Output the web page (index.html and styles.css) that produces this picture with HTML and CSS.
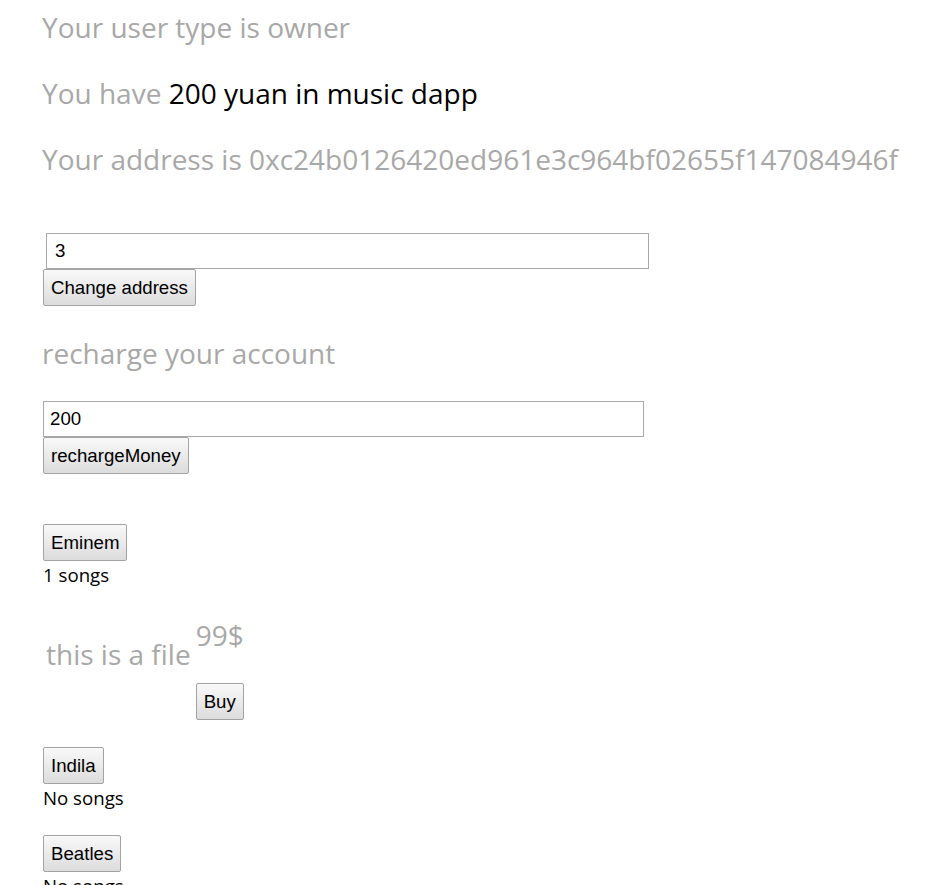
FILE: index.html
```html
<!DOCTYPE html>
<html>
<head>
<meta charset="utf-8">
<link rel="stylesheet" href="styles.css">
</head>
<body>
<div class="page">
  <p class="info">Your user type is owner</p>
  <p class="info">You have <span class="amount">200 yuan in music dapp</span></p>
  <p class="info info-last">Your address is 0xc24b0126420ed961e3c964bf02655f147084946f</p>

  <section class="form form-address">
    <input class="field field-address" type="text" value="3">
    <button class="btn">Change address</button>
  </section>

  <p class="info recharge-title">recharge your account</p>

  <section class="form form-recharge">
    <input class="field field-recharge" type="text" value="200">
    <button class="btn">rechargeMoney</button>
  </section>

  <section class="artist artist-first">
    <button class="btn">Eminem</button>
    <div class="count">1 songs</div>
    <div class="song">
      <p class="song-name">this is a file</p>
      <div class="song-buy">
        <p class="song-price">99$</p>
        <button class="btn">Buy</button>
      </div>
    </div>
  </section>

  <section class="artist">
    <button class="btn">Indila</button>
    <div class="count">No songs</div>
  </section>

  <section class="artist artist-tight">
    <button class="btn">Beatles</button>
    <div class="count">No songs</div>
  </section>
</div>
</body>
</html>
```

FILE: styles.css
```css
html, body {
  margin: 0;
  padding: 0;
  background: #ffffff;
}

.page {
  padding: 8px 0 0 43px;
  font-family: "Open Sans", sans-serif;
}

.info {
  margin: 0 0 28px 0;
  font-family: "Open Sans", sans-serif;
  font-size: 28px;
  line-height: 38px;
  color: #a8a8a8;
  white-space: nowrap;
  margin-left: -1px;
}

.amount {
  color: #000000;
}

.info-last {
  margin-bottom: 0;
}

.form {
  display: flex;
  flex-direction: column;
  align-items: flex-start;
}

.form-address {
  margin-top: 55px;
}

.field {
  box-sizing: border-box;
  height: 36px;
  border: 1px solid #a9a9a9;
  border-radius: 0;
  background: #fff;
  font-family: "Liberation Sans", Arial, sans-serif;
  font-size: 18.67px;
  color: #000;
  outline: none;
  margin: 0;
}

.field-address {
  margin-left: 3px;
  width: 603px;
  padding: 0 8px;
}

.field-recharge {
  width: 601px;
  padding: 0 6px;
}

.btn {
  box-sizing: border-box;
  height: 37px;
  margin: 0;
  padding: 0 7px;
  border: 1px solid #a3a3a3;
  border-radius: 2px;
  background: linear-gradient(#f9f9f9, #dcdcdc);
  font-family: "Liberation Sans", Arial, sans-serif;
  font-size: 18.67px;
  color: #000;
}

.recharge-title {
  margin: 28px 0 29px -1px;
}

.artist {
  margin-top: 27px;
}

.artist-first {
  margin-top: 50px;
}

.artist-tight {
  margin-top: 25px;
}

.count {
  font-family: "Open Sans", sans-serif;
  font-size: 18.67px;
  line-height: 25px;
  color: #000;
  margin-top: 1px;
}

.song {
  display: flex;
  align-items: flex-start;
  gap: 5px;
  margin-top: 29px;
}

.song-name {
  margin: 19px 0 0 3px;
  font-size: 28px;
  line-height: 38px;
  color: #a8a8a8;
}

.song-buy {
  display: flex;
  flex-direction: column;
  align-items: flex-start;
}

.song-price {
  margin: 0 0 29px 0;
  font-size: 28px;
  line-height: 38px;
  color: #a8a8a8;
}
```
